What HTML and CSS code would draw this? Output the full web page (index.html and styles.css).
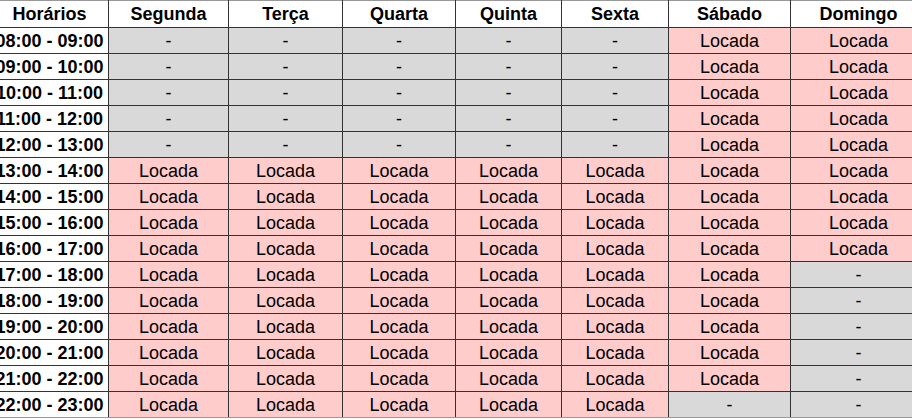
FILE: index.html
```html
<!DOCTYPE html>
<html lang="pt-BR">
<head>
<meta charset="utf-8">
<title>Horários</title>
<link rel="stylesheet" href="styles.css">
</head>
<body>
<table class="agenda">
  <colgroup>
    <col class="c-hora">
    <col class="c-seg">
    <col class="c-ter">
    <col class="c-qua">
    <col class="c-qui">
    <col class="c-sex">
    <col class="c-sab">
    <col class="c-dom">
  </colgroup>
  <thead>
    <tr>
      <th>Horários</th><th>Segunda</th><th>Terça</th><th>Quarta</th><th>Quinta</th><th>Sexta</th><th>Sábado</th><th>Domingo</th>
    </tr>
  </thead>
  <tbody>
    <tr><th>08:00 - 09:00</th><td class="free">-</td><td class="free">-</td><td class="free">-</td><td class="free">-</td><td class="free">-</td><td class="busy">Locada</td><td class="busy">Locada</td></tr>
    <tr><th>09:00 - 10:00</th><td class="free">-</td><td class="free">-</td><td class="free">-</td><td class="free">-</td><td class="free">-</td><td class="busy">Locada</td><td class="busy">Locada</td></tr>
    <tr><th>10:00 - 11:00</th><td class="free">-</td><td class="free">-</td><td class="free">-</td><td class="free">-</td><td class="free">-</td><td class="busy">Locada</td><td class="busy">Locada</td></tr>
    <tr><th>11:00 - 12:00</th><td class="free">-</td><td class="free">-</td><td class="free">-</td><td class="free">-</td><td class="free">-</td><td class="busy">Locada</td><td class="busy">Locada</td></tr>
    <tr><th>12:00 - 13:00</th><td class="free">-</td><td class="free">-</td><td class="free">-</td><td class="free">-</td><td class="free">-</td><td class="busy">Locada</td><td class="busy">Locada</td></tr>
    <tr><th>13:00 - 14:00</th><td class="busy">Locada</td><td class="busy">Locada</td><td class="busy">Locada</td><td class="busy">Locada</td><td class="busy">Locada</td><td class="busy">Locada</td><td class="busy">Locada</td></tr>
    <tr><th>14:00 - 15:00</th><td class="busy">Locada</td><td class="busy">Locada</td><td class="busy">Locada</td><td class="busy">Locada</td><td class="busy">Locada</td><td class="busy">Locada</td><td class="busy">Locada</td></tr>
    <tr><th>15:00 - 16:00</th><td class="busy">Locada</td><td class="busy">Locada</td><td class="busy">Locada</td><td class="busy">Locada</td><td class="busy">Locada</td><td class="busy">Locada</td><td class="busy">Locada</td></tr>
    <tr><th>16:00 - 17:00</th><td class="busy">Locada</td><td class="busy">Locada</td><td class="busy">Locada</td><td class="busy">Locada</td><td class="busy">Locada</td><td class="busy">Locada</td><td class="busy">Locada</td></tr>
    <tr><th>17:00 - 18:00</th><td class="busy">Locada</td><td class="busy">Locada</td><td class="busy">Locada</td><td class="busy">Locada</td><td class="busy">Locada</td><td class="busy">Locada</td><td class="free">-</td></tr>
    <tr><th>18:00 - 19:00</th><td class="busy">Locada</td><td class="busy">Locada</td><td class="busy">Locada</td><td class="busy">Locada</td><td class="busy">Locada</td><td class="busy">Locada</td><td class="free">-</td></tr>
    <tr><th>19:00 - 20:00</th><td class="busy">Locada</td><td class="busy">Locada</td><td class="busy">Locada</td><td class="busy">Locada</td><td class="busy">Locada</td><td class="busy">Locada</td><td class="free">-</td></tr>
    <tr><th>20:00 - 21:00</th><td class="busy">Locada</td><td class="busy">Locada</td><td class="busy">Locada</td><td class="busy">Locada</td><td class="busy">Locada</td><td class="busy">Locada</td><td class="free">-</td></tr>
    <tr><th>21:00 - 22:00</th><td class="busy">Locada</td><td class="busy">Locada</td><td class="busy">Locada</td><td class="busy">Locada</td><td class="busy">Locada</td><td class="busy">Locada</td><td class="free">-</td></tr>
    <tr class="last"><th>22:00 - 23:00</th><td class="busy">Locada</td><td class="busy">Locada</td><td class="busy">Locada</td><td class="busy">Locada</td><td class="busy">Locada</td><td class="free">-</td><td class="free">-</td></tr>
  </tbody>
</table>
</body>
</html>
```

FILE: styles.css
```css
html, body {
  margin: 0;
  padding: 0;
  overflow: hidden;
  background: #ffffff;
}

.agenda {
  border-collapse: collapse;
  table-layout: fixed;
  width: 936px;
  margin-left: -10px;
  font-family: "Liberation Sans", Arial, sans-serif;
  font-size: 18px;
  color: #000;
}

.c-hora { width: 118px; }
.c-seg { width: 120px; }
.c-ter { width: 114px; }
.c-qua { width: 113px; }
.c-qui { width: 106px; }
.c-sex { width: 107px; }
.c-sab { width: 122px; }
.c-dom { width: 136px; }

.agenda th,
.agenda td {
  border: 1px solid #333;
  padding: 0;
  text-align: center;
  white-space: nowrap;
  overflow: visible;
  line-height: 20px;
}

.agenda thead th {
  height: 26px;
  background: #fff;
  font-weight: bold;
  border-top-color: #999;
}

.agenda tbody th {
  font-weight: bold;
  background: #fff;
}

.agenda tbody td,
.agenda tbody th {
  height: 25px;
}

.agenda .last th,
.agenda .last td {
  border-bottom-color: #999;
}

.free { background: #d9d9d9; }
.busy { background: #ffcccc; }
```
